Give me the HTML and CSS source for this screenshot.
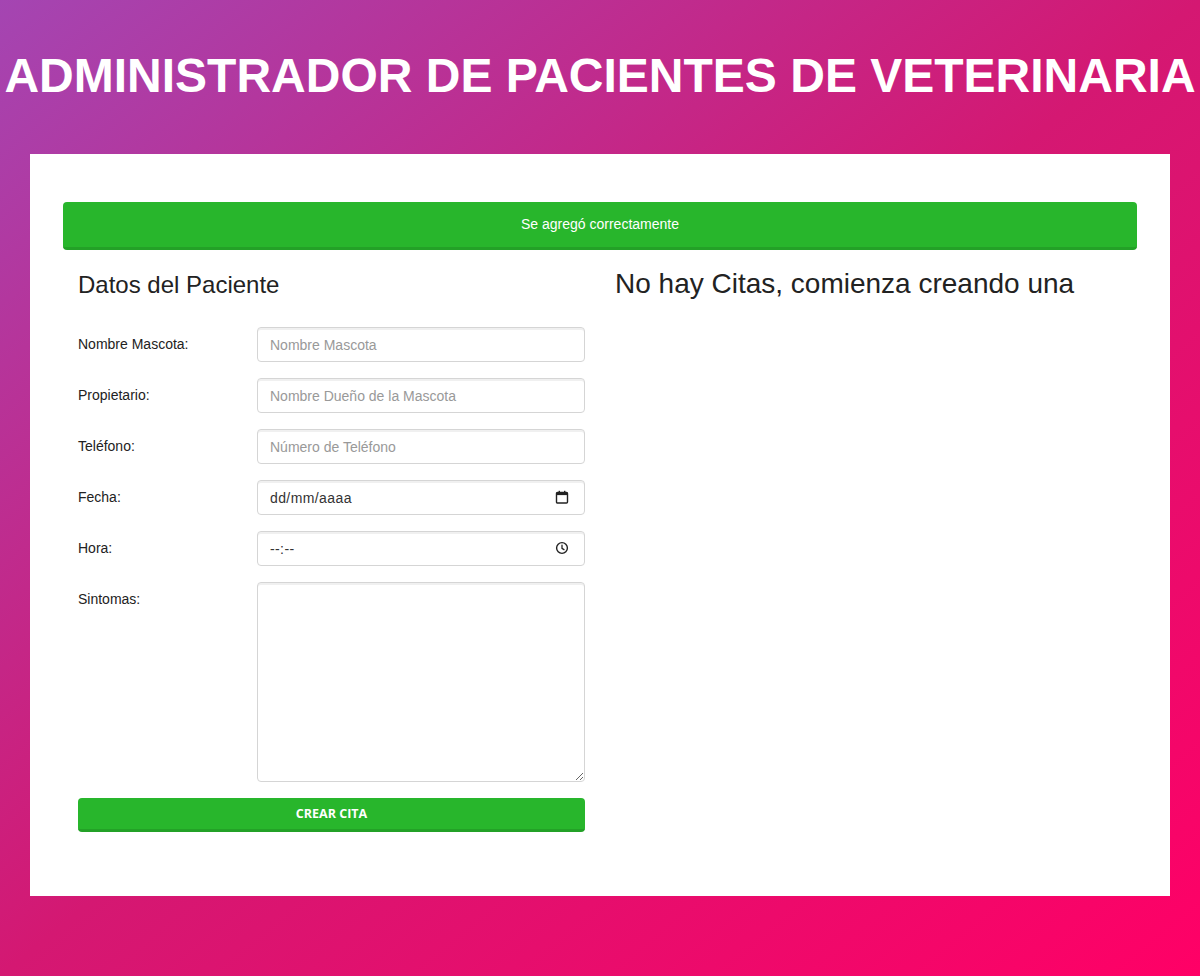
FILE: index.html
```html
<!DOCTYPE html>
<html lang="es">
<head>
<meta charset="utf-8">
<title>Administrador de Pacientes</title>
<link rel="stylesheet" href="styles.css">
</head>
<body>
  <header class="header">
    <h1 class="title">ADMINISTRADOR DE PACIENTES DE VETERINARIA</h1>
  </header>
  <main class="container">
    <div class="alert">Se agregó correctamente</div>
    <div class="row">
      <section class="col">
        <h2 class="form-title">Datos del Paciente</h2>
        <form class="form">
          <div class="form-row">
            <label class="label">Nombre Mascota:</label>
            <div class="field"><input class="input" type="text" placeholder="Nombre Mascota"></div>
          </div>
          <div class="form-row">
            <label class="label">Propietario:</label>
            <div class="field"><input class="input" type="text" placeholder="Nombre Dueño de la Mascota"></div>
          </div>
          <div class="form-row">
            <label class="label">Teléfono:</label>
            <div class="field"><input class="input" type="text" placeholder="Número de Teléfono"></div>
          </div>
          <div class="form-row">
            <label class="label">Fecha:</label>
            <div class="field picker">
              <input class="input input-dark" type="text" placeholder="dd/mm/aaaa">
              <svg class="picker-icon" width="14" height="14" viewBox="0 0 14 14" aria-hidden="true">
                <rect x="1.5" y="2.5" width="11" height="10.5" rx="1" fill="none" stroke="#222" stroke-width="1.4"/>
                <rect x="1.5" y="2.5" width="11" height="2.6" fill="#222"/>
                <rect x="3.6" y="0.8" width="1.4" height="2.4" fill="#222"/>
                <rect x="9" y="0.8" width="1.4" height="2.4" fill="#222"/>
              </svg>
            </div>
          </div>
          <div class="form-row">
            <label class="label">Hora:</label>
            <div class="field picker">
              <input class="input input-dark" type="text" placeholder="--:--">
              <svg class="picker-icon" width="14" height="14" viewBox="0 0 14 14" aria-hidden="true">
                <circle cx="7" cy="7" r="5.4" fill="none" stroke="#222" stroke-width="1.4"/>
                <path d="M7 4.2V7.3L9 8.6" fill="none" stroke="#222" stroke-width="1.3" stroke-linecap="round"/>
              </svg>
            </div>
          </div>
          <div class="form-row">
            <label class="label">Sintomas:</label>
            <div class="field"><textarea class="textarea"></textarea></div>
          </div>
          <button class="btn" type="button">CREAR CITA</button>
        </form>
      </section>
      <section class="col">
        <h2 class="list-title">No hay Citas, comienza creando una</h2>
      </section>
    </div>
  </main>
</body>
</html>
```
FILE: styles.css
```css
html, body {
  margin: 0;
  padding: 0;
}
body {
  min-height: 976px;
  background-image: linear-gradient(to right bottom, #a445b2, #d41872, #ff0066);
  font-family: "Liberation Sans", Arial, sans-serif;
  color: #222;
  box-sizing: border-box;
  padding-top: 1px;
}
* { box-sizing: border-box; }

.header {
  text-align: center;
  margin-top: 47px;
}
.title {
  margin: 0;
  color: #fff;
  font-size: 48px;
  font-weight: 700;
  line-height: 56px;
  white-space: nowrap;
}

.container {
  margin: 50px 30px 0;
  background: #fff;
  height: 742px;
  padding: 48px 33px 0;
}

.alert {
  background: #28b62c;
  border-bottom: 3px solid #23a127;
  border-radius: 4px;
  color: #fff;
  font-size: 14px;
  text-align: center;
  height: 48px;
  line-height: 45px;
}

.row {
  display: flex;
  margin-top: 20px;
}
.col {
  width: 537px;
  padding: 0 15px;
}

.form-title {
  margin: 0;
  font-size: 24px;
  font-weight: 400;
  line-height: 30px;
  color: #222;
}
.list-title {
  margin: 0;
  font-size: 28px;
  font-weight: 400;
  line-height: 28px;
  color: #222;
}

.form {
  margin-top: 27px;
}
.form-row {
  display: flex;
  margin-bottom: 16px;
}
.label {
  width: 179px;
  font-size: 14px;
  line-height: 35px;
  color: #222;
}
.field {
  flex: 1;
}
.picker {
  position: relative;
}
.picker-icon {
  position: absolute;
  right: 16px;
  top: 10px;
}
.input, .textarea {
  display: block;
  width: 100%;
  height: 35px;
  padding: 6px 12px;
  border: 1px solid #d5d5d5;
  border-radius: 4px;
  box-shadow: inset 0 2px 0 rgba(0, 0, 0, 0.06);
  font-family: "Liberation Sans", Arial, sans-serif;
  font-size: 14px;
  color: #333;
  background: #fff;
}
.input::placeholder {
  color: #999;
}
.input-dark::placeholder {
  color: #333;
  letter-spacing: 0.4px;
}
.textarea {
  height: 200px;
  resize: vertical;
}

.btn {
  display: block;
  width: 100%;
  height: 34px;
  background: #28b62c;
  border: 0;
  border-bottom: 3px solid #23a127;
  border-radius: 4px;
  color: #fff;
  font-family: "Open Sans", "Liberation Sans", sans-serif;
  font-weight: 700;
  font-size: 12.5px;
  padding: 0;
}
```
